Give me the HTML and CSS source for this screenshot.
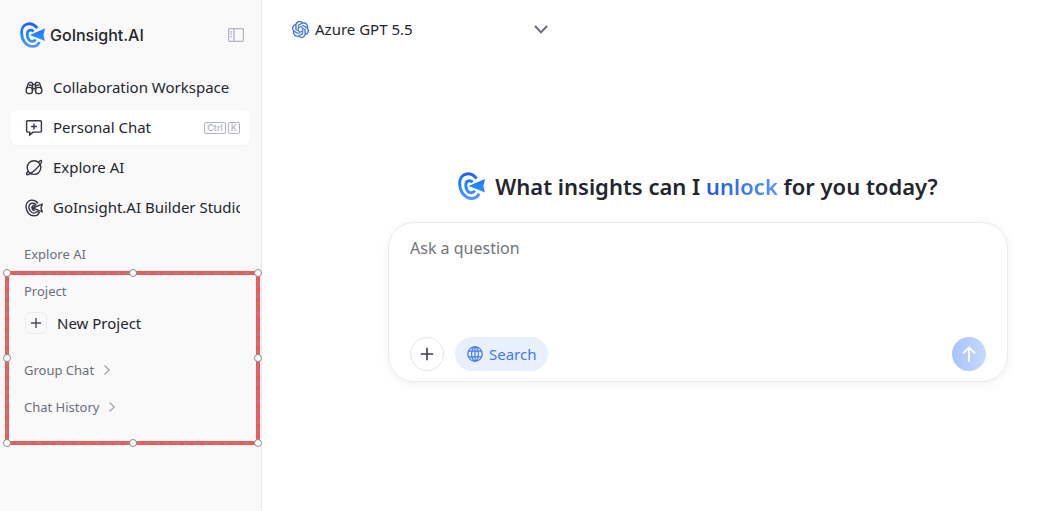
FILE: index.html
```html
<!DOCTYPE html>
<html lang="en">
<head>
  <meta charset="UTF-8" />
  <meta name="viewport" content="width=device-width, initial-scale=1.0" />
  <title>GoInsight.AI</title>
  <link rel="stylesheet" href="styles.css">
</head>
<body>
  <!-- Shared shapes -->
  <svg class="defs" width="0" height="0" aria-hidden="true">
    <defs>
      <linearGradient id="brand" x1="0" y1="0" x2="0" y2="28" gradientUnits="userSpaceOnUse">
        <stop offset="0" stop-color="#1f5cff" />
        <stop offset="0.5" stop-color="#2388fb" />
        <stop offset="1" stop-color="#5596ff" />
      </linearGradient>
      <symbol id="logo" viewBox="0 0 27 28">
        <g fill="none" stroke="url(#brand)" stroke-width="3">
          <path d="M18.6 6.6C16 3.4 12 1.6 9 1.9C4 2.4 1.5 7 1.7 12C2 20 7 26.4 14 26.4C17.2 26.4 19.6 24.6 21 21.6" />
          <path d="M14.8 10C11 7.3 7.7 9 7.8 13.6C8 18 10.5 21.2 13.6 20.8C15.2 20.6 16.2 19.8 16.8 18.6" />
        </g>
        <path d="M10.6 14L27 7L25.4 14L27 20.4Z" fill="url(#brand)" />
      </symbol>
    </defs>
  </svg>

  <div class="app">
    <aside class="sidebar">
      <header class="brand">
        <svg class="brand-logo" aria-hidden="true"><use href="#logo" /></svg>
        <span class="brand-name">GoInsight.AI</span>
        <button class="collapse" type="button" aria-label="Collapse sidebar">
          <svg width="16" height="14" viewBox="0 0 16 14" fill="none" stroke="#b3b5c2" stroke-width="1.3">
            <rect x="0.6" y="0.6" width="14.8" height="12.8" rx="1.5" />
            <path d="M6 0.6V13.4M2.2 3.8H4.2M2.2 6.2H4.2M2.2 8.6H4.2" />
          </svg>
        </button>
      </header>

      <nav class="nav">
        <a class="nav-item" href="#">
          <svg class="icon" viewBox="0 0 18 18">
            <rect x="1.2" y="8.4" width="6.2" height="6.2" rx="2.6" />
            <rect x="10.6" y="8.4" width="6.2" height="6.2" rx="2.6" />
            <path d="M1.6 9.6L3.3 4.6C3.7 3 7.3 2.8 7.6 4.6V12M16.4 9.6L14.7 4.6C14.3 3 10.7 2.8 10.4 4.6V12M7.6 5.4H10.4M7.4 9.6H10.6M4 6.4C5.2 5.6 6.2 6 7 7.2M14 6.4C12.8 5.6 11.8 6 11 7.2" />
          </svg>
          <span class="nav-text">Collaboration Workspace</span>
        </a>
        <a class="nav-item active" href="#">
          <svg class="icon" viewBox="0 0 18 18">
            <path d="M2.7 1.8H15.3Q16.4 1.8 16.4 2.9V12Q16.4 13.1 15.3 13.1H8L4.8 15.9V13.1H2.7Q1.6 13.1 1.6 12V2.9Q1.6 1.8 2.7 1.8ZM9 4.6V10.4M6.1 7.5H11.9" />
          </svg>
          <span class="nav-text">Personal Chat</span>
          <span class="keys"><kbd>Ctrl</kbd><kbd>K</kbd></span>
        </a>
        <a class="nav-item" href="#">
          <svg class="icon" viewBox="0 0 18 18">
            <circle cx="9" cy="8.6" r="6.8" />
            <path d="M13.2 3.2C15 1.6 16.1 1.2 16.4 1.7C17 2.9 14.2 7 10 10.9C6 14.5 2.4 16.4 1.7 15.6C1.3 15.1 1.8 13.8 3.2 12" />
          </svg>
          <span class="nav-text">Explore AI</span>
        </a>
        <a class="nav-item" href="#">
          <svg class="icon" viewBox="0 0 18 18">
            <path d="M13 4.2C11 1.8 8.4 0.9 6 1.2C2.6 1.7 0.8 4.8 1.1 8.4C1.5 13.2 4.8 16.8 9 16.8C11.6 16.8 13.4 15.6 14.2 13.4L11.8 12.4" />
            <path d="M11.4 6C9.4 3.8 6.2 3.6 4.8 5.4C3 7.8 4.1 12 7 13.5C8.8 14.4 11 13.8 11.8 12.4M10.2 7.1C8.8 6 7.2 6.5 7 8.3C6.8 10.2 8.2 11.8 9.8 11.3M7.6 9L17.2 5.2L16 9L17.2 12.8Z" />
          </svg>
          <span class="nav-text">GoInsight.AI Builder Studio</span>
        </a>
      </nav>

      <h2 class="section-title">Explore AI</h2>

      <div class="selection">
        <h2 class="section-title">Project</h2>
        <button class="new-project" type="button">
          <span class="new-icon">
            <svg width="12" height="12" viewBox="0 0 12 12" stroke="#4b4e58" stroke-width="1.4"><path d="M6 1V11M1 6H11" /></svg>
          </span>
          New Project
        </button>
        <button class="section-toggle" type="button">
          Group Chat
          <svg width="8" height="12" viewBox="0 0 8 12" fill="none" stroke="#a5a7b5" stroke-width="1.4"><path d="M1.5 1.5L6.2 6L1.5 10.5" /></svg>
        </button>
        <button class="section-toggle" type="button">
          Chat History
          <svg width="8" height="12" viewBox="0 0 8 12" fill="none" stroke="#a5a7b5" stroke-width="1.4"><path d="M1.5 1.5L6.2 6L1.5 10.5" /></svg>
        </button>

        <!-- Selection frame with drag handles -->
        <div class="frame" aria-hidden="true">
          <i class="handle top left"></i>
          <i class="handle top center"></i>
          <i class="handle top right"></i>
          <i class="handle middle left"></i>
          <i class="handle middle right"></i>
          <i class="handle bottom left"></i>
          <i class="handle bottom center"></i>
          <i class="handle bottom right"></i>
        </div>
      </div>
    </aside>

    <main class="main">
      <div class="model">
        <svg width="17" height="17" viewBox="0 0 24 24" fill="#3f74c9" stroke="#3f74c9" stroke-width="0.4" aria-hidden="true">
          <path d="M22.2819 9.8211a5.9847 5.9847 0 0 0-.5157-4.9108 6.0462 6.0462 0 0 0-6.5098-2.9A6.0651 6.0651 0 0 0 4.9807 4.1818a5.9847 5.9847 0 0 0-3.9977 2.9 6.0462 6.0462 0 0 0 .7427 7.0966 5.98 5.98 0 0 0 .511 4.9107 6.051 6.051 0 0 0 6.5146 2.9001A5.9847 5.9847 0 0 0 13.2599 24a6.0557 6.0557 0 0 0 5.7718-4.2058 5.9894 5.9894 0 0 0 3.9977-2.9001 6.0557 6.0557 0 0 0-.7475-7.0729zm-9.022 12.6081a4.4755 4.4755 0 0 1-2.8764-1.0408l.1419-.0804 4.7783-2.7582a.7948.7948 0 0 0 .3927-.6813v-6.7369l2.02 1.1686a.071.071 0 0 1 .038.052v5.5826a4.504 4.504 0 0 1-4.4945 4.4944zm-9.6607-4.1254a4.4708 4.4708 0 0 1-.5346-3.0137l.142.0852 4.783 2.7582a.7712.7712 0 0 0 .7806 0l5.8428-3.3685v2.3324a.0804.0804 0 0 1-.0332.0615L9.74 19.9502a4.4992 4.4992 0 0 1-6.1408-1.6464zM2.3408 7.8956a4.485 4.485 0 0 1 2.3655-1.9728V11.6a.7664.7664 0 0 0 .3879.6765l5.8144 3.3543-2.0201 1.1685a.0757.0757 0 0 1-.071 0l-4.8303-2.7865A4.504 4.504 0 0 1 2.3408 7.872zm16.5963 3.8558L13.1038 8.364 15.1192 7.2a.0757.0757 0 0 1 .071 0l4.8303 2.7913a4.4944 4.4944 0 0 1-.6765 8.1042v-5.6772a.79.79 0 0 0-.407-.667zm2.0107-3.0231l-.142-.0852-4.7735-2.7818a.7759.7759 0 0 0-.7854 0L9.409 9.2297V6.8974a.0662.0662 0 0 1 .0284-.0615l4.8303-2.7866a4.4992 4.4992 0 0 1 6.6802 4.66zM8.3065 12.863l-2.02-1.1638a.0804.0804 0 0 1-.038-.0567V6.0742a4.4992 4.4992 0 0 1 7.3757-3.4537l-.142.0805L8.704 5.459a.7948.7948 0 0 0-.3927.6813zm1.0976-2.3654l2.602-1.4998 2.6069 1.4998v2.9994l-2.5974 1.4997-2.6067-1.4997Z" />
        </svg>
        <select class="model-select" aria-label="Model">
          <option>Azure GPT 5.5</option>
        </select>
        <svg width="14" height="9" viewBox="0 0 14 9" fill="none" stroke="#666977" stroke-width="1.9" aria-hidden="true"><path d="M1 1L7 7.4L13 1" /></svg>
      </div>

      <section class="hero">
        <h1 class="headline">
          <svg class="headline-logo" aria-hidden="true"><use href="#logo" /></svg>
          <span>What insights can I <span class="unlock">unlock</span> for you today?</span>
        </h1>

        <form class="composer">
          <textarea class="prompt" rows="2" placeholder="Ask a question" aria-label="Ask a question"></textarea>
          <div class="tools">
            <button class="round" type="button" aria-label="Add">
              <svg width="14" height="14" viewBox="0 0 14 14" stroke="#3c3e48" stroke-width="1.6"><path d="M7 0.8V13.2M0.8 7H13.2" /></svg>
            </button>
            <button class="search" type="button">
              <svg width="16" height="16" viewBox="0 0 16 16" fill="none" stroke="#3e79ee" stroke-width="1.2">
                <circle cx="8" cy="8" r="7.2" />
                <ellipse cx="8" cy="8" rx="3.4" ry="7.2" />
                <path d="M8 0.8V15.2M1.6 5.2H14.4M1.6 10.8H14.4" />
              </svg>
              Search
            </button>
            <button class="send" type="submit" aria-label="Send">
              <svg width="14" height="16" viewBox="0 0 14 16" fill="none" stroke="#fff" stroke-width="1.8"><path d="M7 16V1.4M1 7.4L7 1.4L13 7.4" /></svg>
            </button>
          </div>
        </form>
      </section>
    </main>
  </div>
</body>
</html>
```
FILE: styles.css
```css
:root {
  --text: #24262e;
  --muted: #6b6e7b;
  --side-bg: #f9f9f9;
  --border: #ebebed;
  --accent: #3e79f5;
  --red: #f95454;
}

* {
  box-sizing: border-box;
}

body {
  margin: 0;
  font-family: 'Noto Sans', 'Open Sans', sans-serif;
  font-size: 15px;
  line-height: 20px;
  color: var(--text);
  background: #fff;
}

button, select, textarea {
  font: inherit;
  color: inherit;
  background: none;
  border: none;
  padding: 0;
  margin: 0;
}

button {
  cursor: pointer;
}

svg {
  flex: none;
}

.defs {
  position: absolute;
}

.app {
  display: flex;
  min-height: 100vh;
}

/* Sidebar */
.sidebar {
  flex: none;
  width: 262px;
  padding: 20px 11px;
  background: var(--side-bg);
  border-right: 1px solid var(--border);
}

.brand {
  display: flex;
  align-items: center;
  height: 30px;
  padding: 0 6px 0 9px;
}

.brand-logo {
  width: 25px;
  height: 26px;
}

.brand-name {
  margin-left: 5px;
  font-family: Inter, sans-serif;
  font-size: 16px;
  font-weight: 500;
}

.collapse {
  display: flex;
  margin-left: auto;
}

.nav {
  display: flex;
  flex-direction: column;
  gap: 5px;
  margin-top: 20px;
}

.nav-item {
  display: flex;
  align-items: center;
  height: 35px;
  padding: 0 10px 0 14px;
  border-radius: 6px;
  color: inherit;
  text-decoration: none;
}

.nav-item.active {
  background: #fff;
  box-shadow: 0 1px 2px rgba(0,0,0,0.03);
}

.icon {
  width: 18px;
  height: 18px;
  fill: none;
  stroke: #33353f;
  stroke-width: 1.4;
}

.nav-text {
  flex: 1;
  margin-left: 10px;
  padding-bottom: 2px;
  overflow: hidden;
  white-space: nowrap;
}

.keys {
  display: flex;
  gap: 2px;
}

kbd {
  height: 12px;
  padding: 0 2px;
  font: 500 9px/10px Inter, sans-serif;
  color: #b0b2c0;
  border: 1px solid #b0b2c0;
  border-radius: 2px;
}

.section-title {
  margin: 19px 0 0;
  padding: 0 13px;
  font-size: 13px;
  font-weight: 400;
  color: var(--muted);
}

/* Wider than the sidebar padding so the frame reaches the edges */
.selection {
  position: relative;
  margin: 7px -10px 0 -6px;
  padding: 1px 6px 28px;
}

.selection .section-title {
  margin-top: 9px;
}

.new-project {
  display: flex;
  align-items: center;
  gap: 10px;
  margin: 11px 0 26px;
  padding: 0 14px;
}

.new-icon {
  display: flex;
  align-items: center;
  justify-content: center;
  width: 22px;
  height: 22px;
  border: 1px solid var(--border);
  border-radius: 6px;
}

.section-toggle {
  display: flex;
  align-items: center;
  gap: 9px;
  margin-bottom: 17px;
  padding: 0 13px;
  font-size: 13px;
  color: var(--muted);
}

.section-toggle:last-of-type {
  margin-bottom: 0;
}

.frame {
  position: absolute;
  inset: 0;
  border: 4px solid var(--red);
  pointer-events: none;
}

.frame::before {
  content: '';
  position: absolute;
  inset: -3px;
  border: 2px dashed #b07c7c;
}

.handle {
  position: absolute;
  width: 8px;
  height: 8px;
  background: #fff;
  border: 1px solid #8c8c8c;
  border-radius: 50%;
}

.top { top: -6px; }
.middle { top: calc(50% - 4px); }
.bottom { bottom: -6px; }
.left { left: -6px; }
.center { left: calc(50% - 4px); }
.right { right: -6px; }

/* Main area */
.main {
  flex: 1;
  min-width: 0;
  padding: 19px 30px;
}

.model {
  display: flex;
  align-items: center;
  width: 256px;
}

.model-select {
  flex: 1;
  margin-left: 6px;
  font-size: 15px;
  appearance: none;
}

.hero {
  max-width: 700px;
  margin: 130px auto 0;
  padding-left: 80px;
}

.headline {
  display: flex;
  align-items: center;
  justify-content: center;
  gap: 10px;
  margin: 0 0 19px;
  font-size: 22px;
  font-weight: 600;
  line-height: 34px;
}

.headline-logo {
  width: 27px;
  height: 28px;
}

.unlock {
  background: linear-gradient(90deg, #1e57e6, #5497ff);
  -webkit-background-clip: text;
  background-clip: text;
  color: transparent;
}

.composer {
  padding: 13px 21px 10px;
  background: #fff;
  border: 1px solid var(--border);
  border-radius: 26px;
  box-shadow: 0 2px 8px rgba(0,0,0,0.06);
}

.prompt {
  display: block;
  width: 100%;
  height: 101px;
  font-size: 16px;
  line-height: 24px;
  resize: none;
  outline: none;
}

.prompt::placeholder {
  color: #72747c;
}

.tools {
  display: flex;
  align-items: center;
  gap: 11px;
}

.round, .send {
  display: flex;
  align-items: center;
  justify-content: center;
  width: 34px;
  height: 34px;
  border-radius: 50%;
}

.round {
  border: 1px solid #e6e6e9;
}

.search {
  display: flex;
  align-items: center;
  gap: 6px;
  height: 34px;
  padding: 0 12px;
  color: var(--accent);
  background: #e8f0fb;
  border-radius: 17px;
}

.send {
  margin-left: auto;
  background: linear-gradient(90deg, #a8c2fb, #c6dafe);
}
```
